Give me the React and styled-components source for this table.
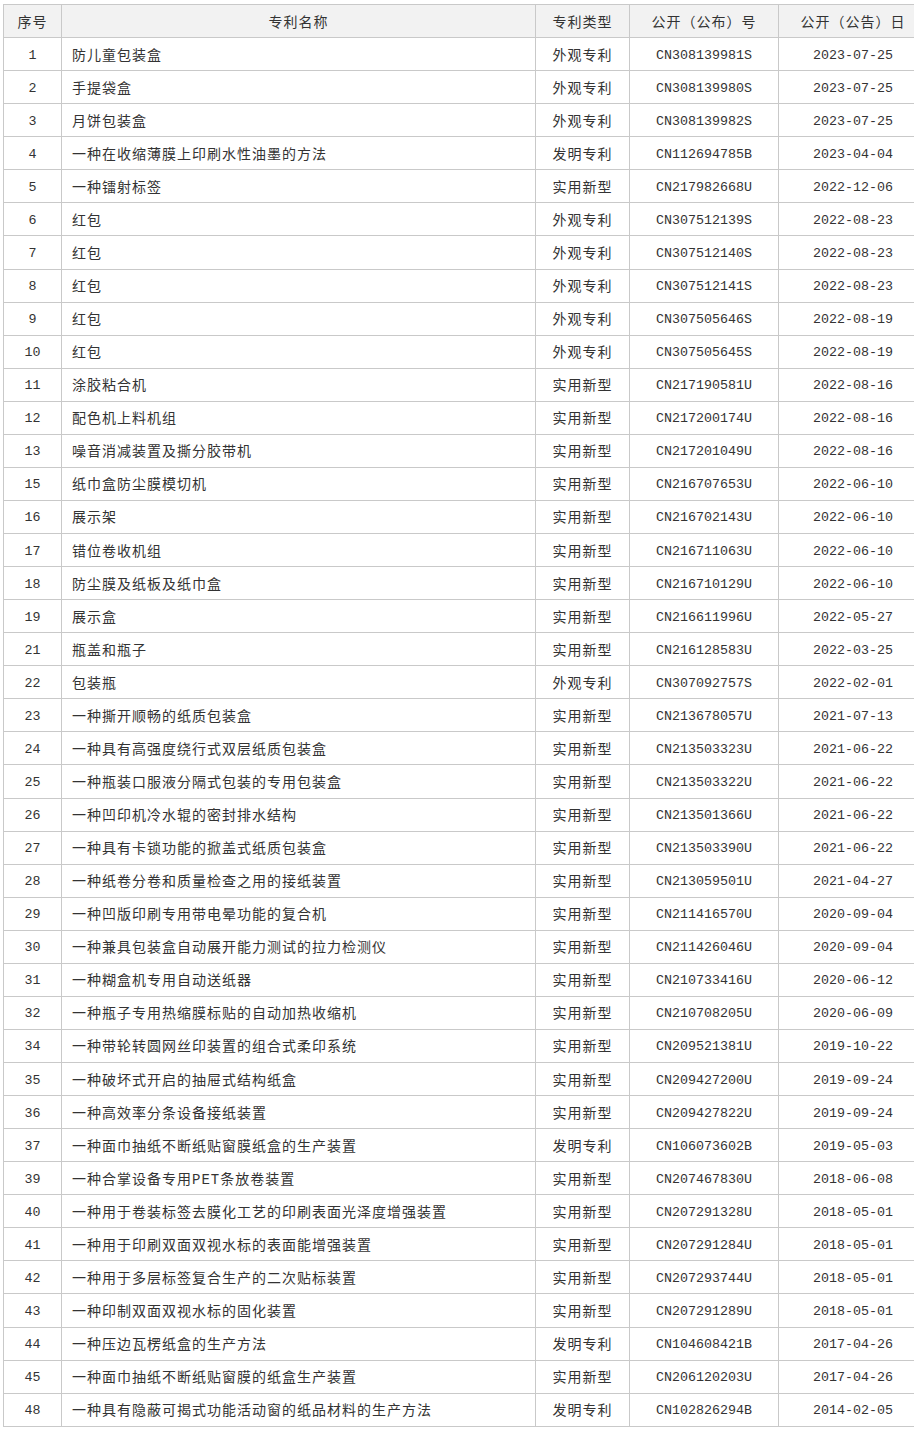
import React from "react";
import styled, { createGlobalStyle } from "styled-components";

const rows = [
	["1", "防儿童包装盒", "外观专利", "CN308139981S", "2023-07-25"],
	["2", "手提袋盒", "外观专利", "CN308139980S", "2023-07-25"],
	["3", "月饼包装盒", "外观专利", "CN308139982S", "2023-07-25"],
	["4", "一种在收缩薄膜上印刷水性油墨的方法", "发明专利", "CN112694785B", "2023-04-04"],
	["5", "一种镭射标签", "实用新型", "CN217982668U", "2022-12-06"],
	["6", "红包", "外观专利", "CN307512139S", "2022-08-23"],
	["7", "红包", "外观专利", "CN307512140S", "2022-08-23"],
	["8", "红包", "外观专利", "CN307512141S", "2022-08-23"],
	["9", "红包", "外观专利", "CN307505646S", "2022-08-19"],
	["10", "红包", "外观专利", "CN307505645S", "2022-08-19"],
	["11", "涂胶粘合机", "实用新型", "CN217190581U", "2022-08-16"],
	["12", "配色机上料机组", "实用新型", "CN217200174U", "2022-08-16"],
	["13", "噪音消减装置及撕分胶带机", "实用新型", "CN217201049U", "2022-08-16"],
	["15", "纸巾盒防尘膜模切机", "实用新型", "CN216707653U", "2022-06-10"],
	["16", "展示架", "实用新型", "CN216702143U", "2022-06-10"],
	["17", "错位卷收机组", "实用新型", "CN216711063U", "2022-06-10"],
	["18", "防尘膜及纸板及纸巾盒", "实用新型", "CN216710129U", "2022-06-10"],
	["19", "展示盒", "实用新型", "CN216611996U", "2022-05-27"],
	["21", "瓶盖和瓶子", "实用新型", "CN216128583U", "2022-03-25"],
	["22", "包装瓶", "外观专利", "CN307092757S", "2022-02-01"],
	["23", "一种撕开顺畅的纸质包装盒", "实用新型", "CN213678057U", "2021-07-13"],
	["24", "一种具有高强度绕行式双层纸质包装盒", "实用新型", "CN213503323U", "2021-06-22"],
	["25", "一种瓶装口服液分隔式包装的专用包装盒", "实用新型", "CN213503322U", "2021-06-22"],
	["26", "一种凹印机冷水辊的密封排水结构", "实用新型", "CN213501366U", "2021-06-22"],
	["27", "一种具有卡锁功能的掀盖式纸质包装盒", "实用新型", "CN213503390U", "2021-06-22"],
	["28", "一种纸卷分卷和质量检查之用的接纸装置", "实用新型", "CN213059501U", "2021-04-27"],
	["29", "一种凹版印刷专用带电晕功能的复合机", "实用新型", "CN211416570U", "2020-09-04"],
	["30", "一种兼具包装盒自动展开能力测试的拉力检测仪", "实用新型", "CN211426046U", "2020-09-04"],
	["31", "一种糊盒机专用自动送纸器", "实用新型", "CN210733416U", "2020-06-12"],
	["32", "一种瓶子专用热缩膜标贴的自动加热收缩机", "实用新型", "CN210708205U", "2020-06-09"],
	["34", "一种带轮转圆网丝印装置的组合式柔印系统", "实用新型", "CN209521381U", "2019-10-22"],
	["35", "一种破坏式开启的抽屉式结构纸盒", "实用新型", "CN209427200U", "2019-09-24"],
	["36", "一种高效率分条设备接纸装置", "实用新型", "CN209427822U", "2019-09-24"],
	["37", "一种面巾抽纸不断纸贴窗膜纸盒的生产装置", "发明专利", "CN106073602B", "2019-05-03"],
	["39", "一种合掌设备专用PET条放卷装置", "实用新型", "CN207467830U", "2018-06-08"],
	["40", "一种用于卷装标签去膜化工艺的印刷表面光泽度增强装置", "实用新型", "CN207291328U", "2018-05-01"],
	["41", "一种用于印刷双面双视水标的表面能增强装置", "实用新型", "CN207291284U", "2018-05-01"],
	["42", "一种用于多层标签复合生产的二次贴标装置", "实用新型", "CN207293744U", "2018-05-01"],
	["43", "一种印制双面双视水标的固化装置", "实用新型", "CN207291289U", "2018-05-01"],
	["44", "一种压边瓦楞纸盒的生产方法", "发明专利", "CN104608421B", "2017-04-26"],
	["45", "一种面巾抽纸不断纸贴窗膜的纸盒生产装置", "实用新型", "CN206120203U", "2017-04-26"],
	["48", "一种具有隐蔽可揭式功能活动窗的纸品材料的生产方法", "发明专利", "CN102826294B", "2014-02-05"],
];

const GlobalStyle = createGlobalStyle`
	html, body {
		margin: 0;
		padding: 0;
		background: #fff;
		overflow-x: hidden;
	}
`;

const Page = styled.div`
	padding: 4px 0 0 3px;
	width: 940px;
`;

const Table = styled.table`
	border-collapse: collapse;
	table-layout: fixed;
	width: 924px;
	color: #333;
	font-family: "Liberation Mono", "Noto Sans CJK SC", monospace;
	font-size: 14px;
`;

const Row = styled.tr`
	height: 33.07px;
`;

const HeadCell = styled.th`
	background: #f2f2f2;
	border: 1px solid #c9c9c9;
	font-weight: normal;
	text-align: center;
	letter-spacing: 1px;
	padding: 0 0 1px;
	white-space: nowrap;
`;

const Cell = styled.td`
	border: 1px solid #c9c9c9;
	padding: ${(p) => (p.$left ? "0 0 1px 10px" : p.$mono ? "2px 0 0" : "0 0 1px")};
	text-align: ${(p) => (p.$left ? "left" : "center")};
	letter-spacing: ${(p) => (p.$mono ? "0" : "1px")};
	font-size: ${(p) => (p.$mono ? "13.33px" : "14px")};
	white-space: nowrap;
`;

export default function App() {
	return (
		<>
			<GlobalStyle />
			<Page>
				<Table>
					<colgroup>
						<col style={{ width: 58 }} />
						<col style={{ width: 474 }} />
						<col style={{ width: 94 }} />
						<col style={{ width: 149 }} />
						<col style={{ width: 149 }} />
					</colgroup>
					<thead>
						<Row>
							<HeadCell>序号</HeadCell>
							<HeadCell>专利名称</HeadCell>
							<HeadCell>专利类型</HeadCell>
							<HeadCell>公开（公布）号</HeadCell>
							<HeadCell>公开（公告）日</HeadCell>
						</Row>
					</thead>
					<tbody>
						{rows.map((r) => (
							<Row key={r[0]}>
								<Cell $mono>{r[0]}</Cell>
								<Cell $left>{r[1]}</Cell>
								<Cell>{r[2]}</Cell>
								<Cell $mono>{r[3]}</Cell>
								<Cell $mono>{r[4]}</Cell>
							</Row>
						))}
					</tbody>
				</Table>
			</Page>
		</>
	);
}
